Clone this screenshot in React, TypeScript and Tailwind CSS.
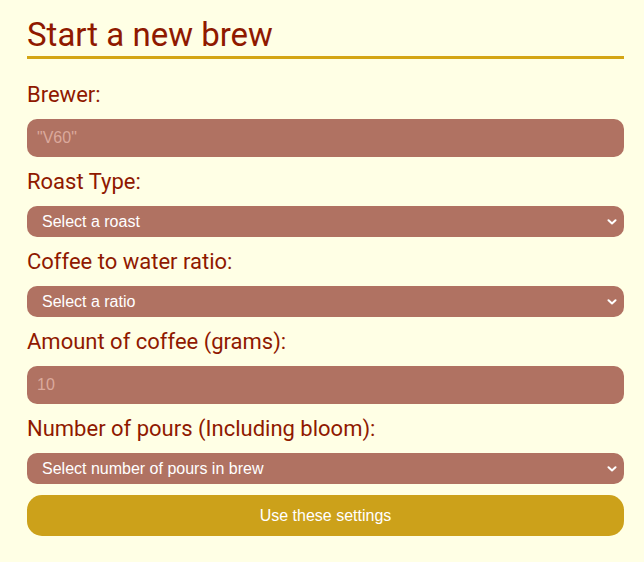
import { useState } from 'react'

function Chevron() {
  return (
    <svg
      className="pointer-events-none absolute right-[7px] top-1/2 -translate-y-1/2"
      width="10"
      height="6"
      viewBox="0 0 10 6"
      fill="none"
    >
      <path d="M1.5 1.2 L5 4.5 L8.5 1.2" stroke="#ffffff" strokeWidth="2" strokeLinecap="round" strokeLinejoin="round" />
    </svg>
  )
}

function Label({ children, first }: { children: string; first?: boolean }) {
  return (
    <label
      className={`block text-[22px] leading-[24px] text-[#8f1900] font-['Roboto',sans-serif] ${
        first ? 'mt-[24px]' : 'mt-[13px]'
      } mb-[12px]`}
    >
      {children}
    </label>
  )
}

function SelectBox({ placeholder }: { placeholder: string }) {
  return (
    <div className="relative">
      <select
        defaultValue=""
        className="block w-full h-[31px] appearance-none rounded-[10px] bg-[#b07262] pl-[15px] pr-[24px] text-[16px] text-white font-['Liberation_Sans',Arial,sans-serif] outline-none"
      >
        <option value="" disabled>
          {placeholder}
        </option>
      </select>
      <Chevron />
    </div>
  )
}

export default function App() {
  const [brewer, setBrewer] = useState('')
  const [grams, setGrams] = useState('')

  return (
    <div className="min-h-screen bg-[#ffffe5] pl-[27px] pr-[20px] pt-[16px] pb-[26px]">
      {/* heading */}
      <h1 className="font-['Roboto',sans-serif] text-[33px] leading-[37px] text-[#8f1900] pb-[3px] border-b-[3px] border-[#d4a514]">
        Start a new brew
      </h1>

      <Label first>Brewer:</Label>
      <input
        value={brewer}
        onChange={(e) => setBrewer(e.target.value)}
        placeholder={'"V60"'}
        className="block w-full h-[38px] rounded-[10px] bg-[#b07262] px-[10px] text-[16px] text-white placeholder:text-[#dba99c] font-['Liberation_Sans',Arial,sans-serif] outline-none"
      />

      <Label>Roast Type:</Label>
      <SelectBox placeholder="Select a roast" />

      <Label>Coffee to water ratio:</Label>
      <SelectBox placeholder="Select a ratio" />

      <Label>Amount of coffee (grams):</Label>
      <input
        value={grams}
        onChange={(e) => setGrams(e.target.value)}
        placeholder="10"
        className="block w-full h-[38px] rounded-[10px] bg-[#b07262] px-[10px] text-[16px] text-white placeholder:text-[#dba99c] font-['Liberation_Sans',Arial,sans-serif] outline-none"
      />

      <Label>Number of pours (Including bloom):</Label>
      <SelectBox placeholder="Select number of pours in brew" />

      {/* submit */}
      <button className="mt-[11px] block w-full h-[41px] rounded-[15px] bg-[#cca11a] text-[16px] text-white font-['Liberation_Sans',Arial,sans-serif]">
        Use these settings
      </button>
    </div>
  )
}
